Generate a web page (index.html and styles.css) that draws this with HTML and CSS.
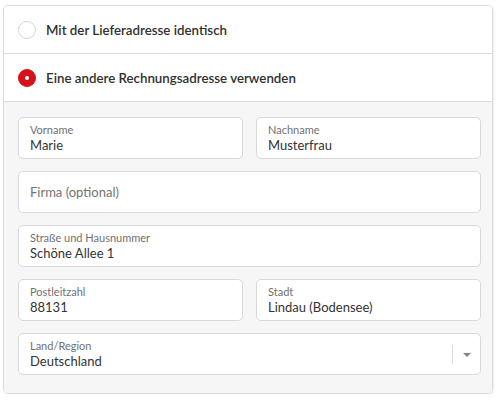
FILE: index.html
```html
<!DOCTYPE html>
<html lang="de">
<head>
  <meta charset="utf-8">
  <title>Rechnungsadresse</title>
  <link rel="stylesheet" href="styles.css">
</head>
<body>

  <div id="billing-box">
    <label class="option">
      <span class="radio"></span>
      <span class="option-text">Mit der Lieferadresse identisch</span>
    </label>
    <label class="option">
      <span class="radio checked"></span>
      <span class="option-text">Eine andere Rechnungsadresse verwenden</span>
    </label>

    <div id="billing-form">
      <div class="field-row two">
        <div class="field">
          <span class="field-label">Vorname</span>
          <span class="field-value">Marie</span>
        </div>
        <div class="field">
          <span class="field-label">Nachname</span>
          <span class="field-value">Musterfrau</span>
        </div>
      </div>
      <div class="field-row">
        <div class="field empty">
          <span class="field-placeholder">Firma (optional)</span>
        </div>
      </div>
      <div class="field-row">
        <div class="field">
          <span class="field-label">Straße und Hausnummer</span>
          <span class="field-value">Schöne Allee 1</span>
        </div>
      </div>
      <div class="field-row two">
        <div class="field">
          <span class="field-label">Postleitzahl</span>
          <span class="field-value">88131</span>
        </div>
        <div class="field">
          <span class="field-label">Stadt</span>
          <span class="field-value">Lindau (Bodensee)</span>
        </div>
      </div>
      <div class="field-row">
        <div class="field select">
          <div class="select-text">
            <span class="field-label">Land/Region</span>
            <span class="field-value">Deutschland</span>
          </div>
          <div class="select-arrow"><span class="caret"></span></div>
        </div>
      </div>
    </div>
  </div>

</body>
</html>
```

FILE: styles.css
```css
* {
  box-sizing: border-box;
}
body {
  margin: 0;
  background-color: white;
  font-family: Lato, "Open Sans", sans-serif;
  color: #333;
}
#billing-box {
  width: 490px;
  margin: 5px 0 0 3px;
  border: 1px solid #dcdcdc;
  border-radius: 5px;
  overflow: hidden;
  box-shadow: 1px 1px 2px rgba(0, 0, 0, 0.08);
}
.option {
  display: flex;
  align-items: center;
  height: 48px;
  padding: 0 14px;
  border-bottom: 1px solid #dcdcdc;
  background-color: white;
  cursor: pointer;
}
.radio {
  width: 18px;
  height: 18px;
  border-radius: 50%;
  border: 1px solid #d6d6d6;
  background-color: white;
  margin-right: 10px;
  position: relative;
}
.radio.checked {
  border-color: #d51219;
  background-color: #d51219;
}
.radio.checked::after {
  content: "";
  position: absolute;
  top: 6px;
  left: 6px;
  width: 4px;
  height: 4px;
  border-radius: 50%;
  background-color: white;
}
.option-text {
  font-size: 13.3px;
  font-weight: 600;
  color: #303030;
}
#billing-form {
  background-color: #f6f6f6;
  padding: 15px 11px 18px 14px;
  display: flex;
  flex-direction: column;
  gap: 12px;
}
.field-row {
  display: grid;
  grid-template-columns: 1fr;
}
.field-row.two {
  grid-template-columns: 1fr 1fr;
  gap: 13px;
}
.field {
  height: 42px;
  background-color: white;
  border: 1px solid #d9d9d9;
  border-radius: 5px;
  padding: 5px 11px 0;
  display: flex;
  flex-direction: column;
}
.field-label {
  font-size: 11px;
  line-height: 14px;
  color: #707070;
}
.field-value {
  font-size: 13px;
  line-height: 16px;
  color: #333;
}
.field.empty {
  justify-content: center;
  padding-top: 0;
}
.field-placeholder {
  font-size: 13px;
  color: #737373;
}
.field.select {
  flex-direction: row;
  padding-right: 0;
}
.select-text {
  flex: 1;
  display: flex;
  flex-direction: column;
}
.select-arrow {
  width: 28px;
  margin: 6px 0 10px;
  border-left: 1px solid #dcdcdc;
  display: flex;
  justify-content: center;
  align-items: center;
}
.caret {
  width: 0;
  height: 0;
  border-left: 4px solid transparent;
  border-right: 4px solid transparent;
  border-top: 4px solid #858585;
}
```
